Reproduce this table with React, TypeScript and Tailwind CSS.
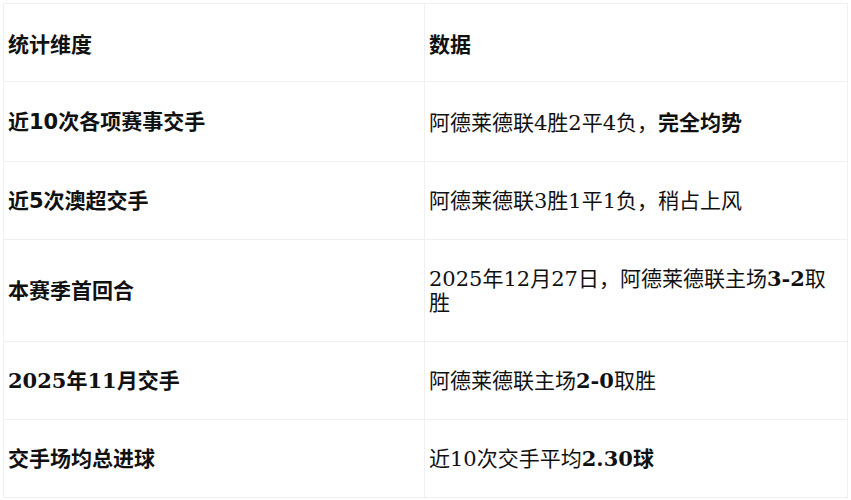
const rows: { label: React.ReactNode; value: React.ReactNode }[] = [
  {
    label: <span className="font-['DejaVu_Sans','Noto_Sans_CJK_SC',sans-serif]">近10次各项赛事交手</span>,
    value: (
      <>
        阿德莱德联4胜2平4负，<strong className="font-['Noto_Sans_CJK_SC',sans-serif] font-bold">完全均势</strong>
      </>
    ),
  },
  {
    label: <span className="font-['DejaVu_Sans','Noto_Sans_CJK_SC',sans-serif]">近5次澳超交手</span>,
    value: "阿德莱德联3胜1平1负，稍占上风",
  },
  {
    label: "本赛季首回合",
    value: (
      <>
        2025年12月27日，阿德莱德联主场<strong>3-2</strong>取胜
      </>
    ),
  },
  {
    label: "2025年11月交手",
    value: (
      <>
        阿德莱德联主场<strong>2-0</strong>取胜
      </>
    ),
  },
  {
    label: "交手场均总进球",
    value: (
      <>
        近10次交手平均<strong>2.30球</strong>
      </>
    ),
  },
]

export default function App() {
  return (
    <div className="w-[851px] h-[500px] bg-white p-[3px] font-['DejaVu_Serif','Noto_Sans_CJK_SC',serif] text-[21px] leading-[24px] text-[#111]">
      <table className="w-[845px] border-collapse table-fixed">
        <colgroup>
          <col className="w-[421px]" />
          <col />
        </colgroup>
        <thead>
          <tr>
            <th className="border border-[#f0f0f0] pl-[4px] pr-[4px] pt-[27px] pb-[26px] text-left font-bold font-['Noto_Sans_CJK_SC',sans-serif]">
              统计维度
            </th>
            <th className="border border-[#f0f0f0] pl-[4px] pr-[4px] pt-[27px] pb-[26px] text-left font-bold font-['Noto_Sans_CJK_SC',sans-serif]">
              数据
            </th>
          </tr>
        </thead>
        <tbody>
          {rows.map((r, i) => (
            <tr key={i}>
              <td className="border border-[#f0f0f0] pl-[4px] pr-[4px] pt-[27px] pb-[26px] align-middle font-bold">
                {r.label}
              </td>
              <td className="border border-[#f0f0f0] pl-[4px] pr-[4px] pt-[27px] pb-[26px] align-middle">
                {r.value}
              </td>
            </tr>
          ))}
        </tbody>
      </table>
    </div>
  )
}
